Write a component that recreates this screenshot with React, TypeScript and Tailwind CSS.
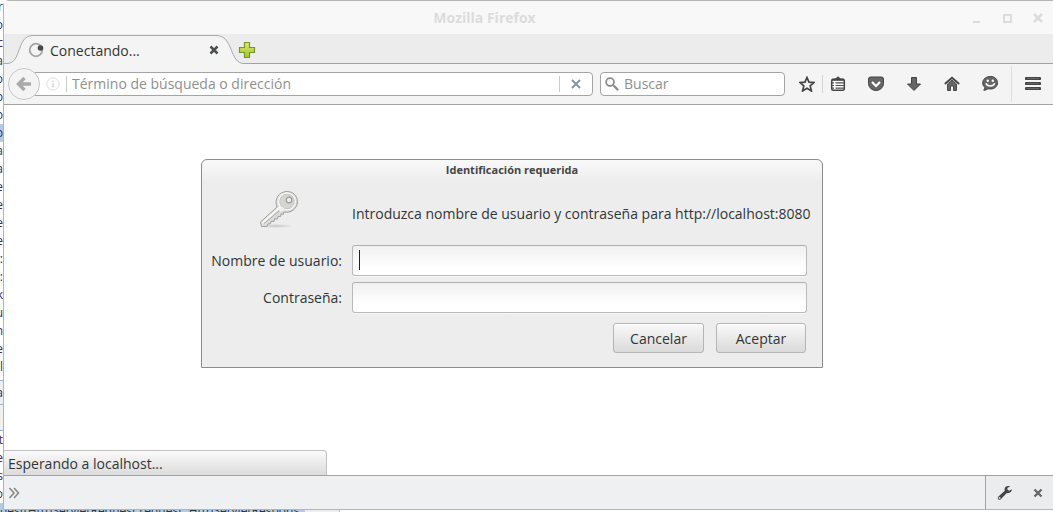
import type { ReactNode } from "react";

const editorLines = [
  "r", "o", "c", "a", "o", "b", "b", "b", "a", "a", "e", "e", "e", "e",
  "e:", "e:", "k", "u", "n", "e", "l",
];

const tools = [
  {
    name: "Pocket",
    icon: (
      <>
        <path d="M0.5 3q0-2 2-2h11q2 0 2 2v4.5a7.5 7 0 0 1-15 0z" fill="#666" stroke="#444" />
        <path d="M4 6l4 4 4-4" fill="none" stroke="#fff" strokeWidth="2.2" />
      </>
    ),
  },
  {
    name: "Descargas",
    icon: <path d="M5.5 1.5h5v6.5h4L8 14.5 1.5 8h4z" fill="#666" stroke="#444" />,
  },
  {
    name: "Inicio",
    icon: (
      <>
        <path d="M3.5 8L8 4l4.5 4v6.500h-3V10h-3v4.500h-3z" fill="#666" stroke="#4a4a4a" />
        <path d="M0.800 8L8 1.800 15.200 8" fill="none" stroke="#444" strokeWidth="1.800" />
      </>
    ),
  },
  {
    name: "Hello",
    icon: (
      <>
        <path d="M8.500 0.500c4.200 0 7 2.600 7 6.200s-2.800 6.300-7 6.300c-1 0-1.800-.1-2.500-.3-1 .9-2.400 1.500-4.300 1.500.8-.8 1.200-1.700 1.200-2.700C1.400 10.400.7 8.700.7 6.700c0-3.600 3.600-6.200 7.800-6.200z" fill="#666" stroke="#444" />
        <circle cx="5.800" cy="4.800" r="1.200" fill="#fff" />
        <circle cx="10.800" cy="4.800" r="1.200" fill="#fff" />
        <path d="M4 7.300c1 3.600 7.600 3.600 8.600 0" fill="none" stroke="#fff" strokeWidth="1.500" />
      </>
    ),
  },
];

function Icon({ children }: { children: ReactNode }) {
  return (
    <svg viewBox="0 0 16 16" className="block size-4" aria-hidden="true">
      {children}
    </svg>
  );
}

function TitleBar() {
  return (
    <header className="grid h-[33px] grid-cols-[1fr_auto_1fr] items-center bg-[#f8f8f8] text-[#dcdcdc]">
      <h1 className="col-start-2 pr-[88px] text-[14px] leading-5 font-bold">Mozilla Firefox</h1>
      <div className="flex justify-end gap-[15px] pr-[7px]">
        <button aria-label="Minimizar">
          <Icon><path d="M5 12h7" stroke="currentColor" strokeWidth="2" /></Icon>
        </button>
        <button aria-label="Maximizar">
          <Icon><path d="M5 5h7v7H5z" fill="none" stroke="currentColor" strokeWidth="2" /></Icon>
        </button>
        <button aria-label="Cerrar ventana">
          <Icon><path d="M4 4l8 8M12 4l-8 8" stroke="currentColor" strokeWidth="2.500" /></Icon>
        </button>
      </div>
    </header>
  );
}

function TabStrip() {
  return (
    <div className="flex h-[30px] items-center border-b border-[#a2a2a2] bg-[#ececec]">
      <div className="relative h-[30px] w-[234px] shrink-0">
        <svg viewBox="0 0 242 30" className="absolute top-0 left-0 h-[30px] w-[242px]" aria-hidden="true">
          <path
            d="M0 29.500h3c15 0 9-28 26-28h183c18 0 13 28 28 28h2v.5H0z"
            fill="#f4f4f4"
          />
          <path d="M0 29.500h3c15 0 9-28 26-28h183c18 0 13 28 28 28h2" fill="none" stroke="#a3abb3" />
        </svg>
        <div className="relative flex h-[30px] items-center pt-0.5 pr-4 pl-6">
          <svg viewBox="0 0 16 16" className="size-4" aria-hidden="true">
            <circle cx="8" cy="8" r="6.300" fill="none" stroke="#a4a4a4" strokeWidth="1.800" />
            <circle cx="12.500" cy="6" r="2.800" fill="#4a4a4a" />
          </svg>
          <span className="ml-1.5 flex-1 pt-0.5 text-[14px] leading-5">Conectando...</span>
          <button aria-label="Cerrar pestaña">
            <Icon><path d="M4.500 4.500l7 7M11.500 4.500l-7 7" stroke="#4c4f50" strokeWidth="2.500" /></Icon>
          </button>
        </div>
      </div>
      <button aria-label="Nueva pestaña" className="pt-0.5">
        <svg viewBox="0 0 18 18" className="size-[18px]" aria-hidden="true">
          <defs>
            <linearGradient id="plus" x2="0" y2="1">
              <stop offset="0" stopColor="#dbe873" />
              <stop offset="1" stopColor="#a7c32c" />
            </linearGradient>
          </defs>
          <path d="M6.500 1.500h5v5h5v5h-5v5h-5v-5h-5v-5h5z" fill="url(#plus)" stroke="#75952b" strokeWidth="1.200" />
        </svg>
      </button>
    </div>
  );
}

function Toolbar() {
  return (
    <nav className="flex h-[41px] items-center border-b border-[#a2a2a2] bg-[#f4f4f4]">
      <button
        aria-label="Atrás"
        className="z-10 ml-1 flex size-8 shrink-0 items-center justify-center rounded-full border border-[#c8c8c8] bg-[#f4f4f4]"
      >
        <Icon><path d="M8.500 2L2.500 8l6 6M3 8h12" fill="none" stroke="#aaa" strokeWidth="3.400" /></Icon>
      </button>
      <div className="-ml-1.5 flex h-6 flex-1 items-center rounded-r-sm border border-[#a4a4a4] bg-white pl-[11px]">
        <svg viewBox="0 0 16 16" className="size-3.5 shrink-0" aria-hidden="true">
          <circle cx="8" cy="8" r="7" fill="none" stroke="#d9d9d9" />
          <path d="M8 7v5M8 4v1.500" stroke="#d4d4d4" strokeWidth="1.800" />
        </svg>
        <span className="ml-1.5 h-4 w-px bg-[#ccc]" />
        <input
          aria-label="Término de búsqueda o dirección"
          placeholder="Término de búsqueda o dirección"
          className="h-5 min-w-0 flex-1 pl-[5px] text-[14px] leading-5 outline-none placeholder:text-[#8f8f8f]"
        />
        <button aria-label="Detener" className="flex h-4 w-[33px] items-center justify-center border-l border-[#ccc]">
          <Icon><path d="M4 4l8 8M12 4l-8 8" stroke="#8796a5" strokeWidth="2" /></Icon>
        </button>
      </div>
      <div className="ml-[7px] flex h-6 w-[185px] items-center rounded-sm border border-[#a4a4a4] bg-white pl-1">
        <svg viewBox="0 0 16 16" className="size-3.5 shrink-0" aria-hidden="true">
          <circle cx="5.800" cy="5.800" r="4.500" fill="none" stroke="#8c8c8c" strokeWidth="2" />
          <path d="M9.500 9.500l5.500 5.500" stroke="#8c8c8c" strokeWidth="2.500" />
        </svg>
        <input
          aria-label="Buscar"
          placeholder="Buscar"
          className="ml-[5px] h-5 min-w-0 flex-1 text-[14px] leading-5 outline-none placeholder:text-[#8f8f8f]"
        />
      </div>
      <button aria-label="Añadir a marcadores" className="ml-3.5">
        <Icon>
          <path d="M8 1.500l2 4.700 5 .4-3.800 3.300 1.200 5L8 12.200l-4.400 2.700 1.200-5L1 6.600l5-.4z" fill="none" stroke="#444" strokeWidth="1.700" />
        </Icon>
      </button>
      <span className="mx-[7px] h-[18px] w-px bg-[#d4d4d4]" />
      <button aria-label="Ver marcadores">
        <Icon>
          <path d="M5.500 3L8 .8 10.500 3z" fill="#444" stroke="#444" />
          <rect x="1.700" y="3.200" width="12.600" height="11" rx="1.500" fill="#fff" stroke="#444" strokeWidth="1.500" />
          <path d="M2 3.800h12" stroke="#444" strokeWidth="2" />
          <path d="M5.500 6.800h8.500M5.500 9.500h8.500M5.500 12.200h8.500M2 6.800h2M2 9.500h2M2 12.200h2" stroke="#505050" strokeWidth="1.200" />
        </Icon>
      </button>
      <div className="ml-[22px] flex gap-[22px]">
        {tools.map((tool) => (
          <button key={tool.name} aria-label={tool.name}>
            <Icon>{tool.icon}</Icon>
          </button>
        ))}
      </div>
      <span className="ml-[13px] h-9 w-px bg-[#dedede]" />
      <button aria-label="Abrir menú" className="mr-3 ml-[13px]">
        <Icon>
          <path d="M1.300 2.500h13.400M1.300 7.500h13.400M1.300 12.500h13.400" stroke="#444" strokeWidth="3" strokeLinecap="round" />
          <path d="M2 2.500h12M2 7.500h12M2 12.500h12" stroke="#666" />
        </Icon>
      </button>
    </nav>
  );
}

function KeyIcon() {
  return (
    <svg viewBox="0 0 40 40" className="size-10" aria-hidden="true">
      <defs>
        <linearGradient id="metal" x2="1" y2="1">
          <stop offset="0" stopColor="#f4f4f2" />
          <stop offset="1" stopColor="#c9cac6" />
        </linearGradient>
        <radialGradient id="shade">
          <stop offset="0" stopColor="#777" stopOpacity="0.350" />
          <stop offset="1" stopColor="#777" stopOpacity="0" />
        </radialGradient>
      </defs>
      <ellipse cx="17" cy="37" rx="17" ry="2" fill="url(#shade)" />
      <path
        d="M18 18C15 10 20 2.500 28 2.500c6 0 10.500 4.500 10.500 10 0 7-6.500 12-13.500 10.500l-.8 2.500-2-.8-.7 3-2.500-.5-.5 2.800-2.800-.3-.7 2.700-2.800-.2-.7 2.500-2.300.2-1.200 2.600H2.500L1.500 33z"
        fill="url(#metal)"
        stroke="#a0a19d"
        strokeLinejoin="round"
      />
      <circle cx="28" cy="12.500" r="8.300" fill="#d5d6d2" stroke="#fff" strokeWidth="1.200" />
      <circle cx="28" cy="12.500" r="7.300" fill="none" stroke="#b7b8b4" strokeWidth="0.600" />
      <path d="M3.500 34L21 18" stroke="#fff" strokeWidth="1.500" />
      <path d="M5 34.500L22 20.500" stroke="#aaaba7" />
      <circle cx="30" cy="11" r="2.800" fill="#ececec" stroke="#999a96" strokeWidth="1.200" />
      <path d="M19 19l5-1 2 3-5 2z" fill="#efefed" />
    </svg>
  );
}

function LoginDialog() {
  const field =
    "block h-[31px] w-full rounded-[3px] border border-[#b8bab8] border-t-[#adb0ad] bg-linear-to-b from-[#f0f0f0] to-white to-75% px-2 text-[14px] outline-none shadow-[0_1px_0_#f8f8f8]";
  const button =
    "h-[30px] rounded-[3px] border border-[#b4b5b4] bg-linear-to-b from-[#f9f9f9] to-[#dadada] pt-0.5 text-[14px] leading-5 shadow-[inset_0_1px_0_#fff]";
  const label = "flex justify-end text-[14px] leading-5 whitespace-nowrap";

  return (
    <form
      role="dialog"
      aria-labelledby="dialog-title"
      onSubmit={(e) => e.preventDefault()}
      className="w-full max-w-[622px] self-start rounded-t-md border border-[#8b8d8b] bg-[#ededed] bg-linear-to-b from-[#f9f9f9] to-[#ededed] to-[22px] pb-3.5"
    >
      <h2 id="dialog-title" className="h-[22px] text-center text-[11px] leading-5 font-bold text-[#454545]">
        Identificación requerida
      </h2>
      <div className="grid grid-cols-[126px_minmax(0,1fr)] items-center gap-x-2.5 gap-y-1.5 pr-[15px] pl-3.5">
        <div className="flex h-[57px] items-center justify-center pb-1">
          <KeyIcon />
        </div>
        <p className="pt-1.5 text-[14px] leading-5 whitespace-nowrap">
          Introduzca nombre de usuario y contraseña para http://localhost:8080
        </p>
        <label htmlFor="user" className={label}>Nombre de usuario:</label>
        <div className="relative">
          <input id="user" className={field} />
          <span className="absolute top-[5px] left-[7px] h-5 w-px bg-[#222]" />
        </div>
        <label htmlFor="password" className={label}>Contraseña:</label>
        <input id="password" type="password" className={field} />
      </div>
      <div className="mt-2.5 flex justify-end gap-3 pr-4">
        <button type="button" className={`${button} w-[91px]`}>Cancelar</button>
        <button type="submit" className={`${button} w-[90px]`}>Aceptar</button>
      </div>
    </form>
  );
}

export default function App() {
  return (
    <div className="flex h-screen flex-col overflow-hidden bg-white font-['Open_Sans','Noto_Sans',sans-serif] text-[#303638]">
      <div className="flex min-h-0 flex-1">
        <aside className="flex w-[3px] shrink-0 flex-col overflow-hidden text-[12px] leading-[18px] text-[#3c2a52]">
          {editorLines.map((line, i) => (
            <span
              key={i}
              className={`flex h-[18px] shrink-0 justify-end ${i === 7 ? "bg-[#b4cbe6]" : ""} ${i === 0 ? "-mt-0.5" : ""}`}
            >
              {line}
            </span>
          ))}
          <span className="mt-1 flex h-[25px] shrink-0 items-center justify-end border-y border-[#9cb4cc] bg-[#eee]">a</span>
          <span className="h-[26px] shrink-0 border-b border-[#9cb4cc] bg-[#f0f0f0]" />
          {["t", "e", "s", "o"].map((line) => (
            <span key={line} className="flex h-[18px] shrink-0 justify-end">{line}</span>
          ))}
          <span className="flex-1 bg-[#b4cbe6]" />
        </aside>
        <div className="flex min-w-0 flex-1 flex-col rounded-tl-md border-t border-b border-l border-[#b4b4b4] bg-white">
          <TitleBar />
          <TabStrip />
          <Toolbar />
          <main className="flex min-h-0 flex-1 flex-col">
            <div className="flex flex-1 justify-center pt-[54px] pr-[33px]">
              <LoginDialog />
            </div>
            <div className="h-[25px] w-[323px] rounded-tr border-t border-r border-[#c2c2c2] bg-linear-to-b from-[#fafafa] to-[#dcdcdc] px-1 text-[14px] leading-[26px]">
              Esperando a localhost...
            </div>
          </main>
          <footer className="flex h-[34px] items-stretch border-t border-[#a2a2a2] bg-[#eff0f2]">
            <label htmlFor="console" className="flex items-center pl-1" aria-label="Consola">
              <svg viewBox="0 0 12 12" className="size-3" aria-hidden="true">
                <path d="M1.500 1l4.500 5-4.500 5M6 1l4.500 5L6 11" fill="none" stroke="#888" strokeWidth="1.600" />
              </svg>
            </label>
            <input id="console" className="min-w-0 flex-1 px-2 text-[14px] outline-none" />
            <div className="flex items-center gap-[17px] border-l border-[#a2a2a2] bg-[#ebeced] pr-[7px] pl-[11px]">
              <button aria-label="Herramientas">
                <Icon>
                  <path
                    d="M14.800 4.200l-2.600 1.500-1.700-1L10.400 3 13 1.400C10.800.6 8.300 1.300 7.700 3.500c-.2.800-.1 1.500.1 2.200L1.400 11.600c-1.700 1.600.5 4.300 2.400 2.700l6-6.200c2.700.8 5.300-1.300 5-3.900zM2.600 13.800a.9.900 0 1 1 0-1.800.9.900 0 0 1 0 1.800z"
                    fill="#444"
                  />
                </Icon>
              </button>
              <button aria-label="Cerrar consola">
                <Icon><path d="M4.500 4.500l7 7M11.500 4.500l-7 7" stroke="#666" strokeWidth="2.300" /></Icon>
              </button>
            </div>
          </footer>
        </div>
      </div>
      <div className="flex h-0.5 shrink-0 overflow-hidden text-[12px] leading-[2px] whitespace-nowrap">
        <span className="w-[305px] overflow-hidden bg-[#b4cbe6]">uest(HttpServletRequest request, HttpServletRespons</span>
        <span className="w-[35px] border-r border-[#bbb] bg-[#eee]" />
      </div>
    </div>
  );
}
